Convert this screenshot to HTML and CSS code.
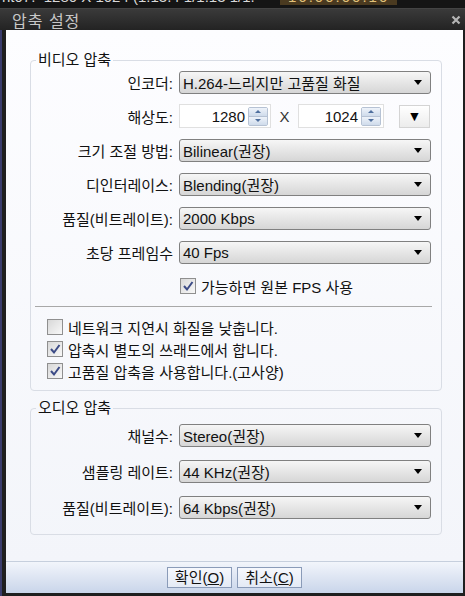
FILE: index.html
```html
<!DOCTYPE html>
<html>
<head>
	<meta charset="utf-8">
	<meta name="viewport" content="width=device-width, initial-scale=1.0">
	<link rel="stylesheet" href="styles.css">
<title>압축 설정</title>
</head>
<body>
<div class="screen">
	<div class="topstrip">
		<div class="strip-line">
			<span class="strip-text">ht07.&nbsp; 1280 X 1024 (1:13.4 1/1:13 1/1.</span>
			<span class="strip-time">16:00:00.10</span>
		</div>
	</div>

	<div class="titlebar">
		<span class="title">압축 설정</span>
		<svg class="close" width="10" height="10" viewBox="0 0 10 10"><path d="M1.5 1.5 L8.5 8.5 M8.5 1.5 L1.5 8.5" stroke="#b4b4b4" stroke-width="2.2"/></svg>
	</div>

	<div class="frame">
		<div class="main">
			<div class="content">
				<fieldset class="group video">
					<legend>비디오 압축</legend>
					<div class="row">
						<label class="lbl">인코더:</label>
						<div class="select">H.264-느리지만 고품질 화질<span class="arrow"></span></div>
					</div>
					<div class="row">
						<label class="lbl">해상도:</label>
						<div class="spin first">
							<span class="value">1280</span>
							<span class="spin-btns"><span class="up"></span><span class="down"></span></span>
						</div>
						<span class="times">X</span>
						<div class="spin second">
							<span class="value">1024</span>
							<span class="spin-btns"><span class="up"></span><span class="down"></span></span>
						</div>
						<div class="preset">&#9660;</div>
					</div>
					<div class="row">
						<label class="lbl">크기 조절 방법:</label>
						<div class="select">Bilinear(권장)<span class="arrow"></span></div>
					</div>
					<div class="row">
						<label class="lbl">디인터레이스:</label>
						<div class="select">Blending(권장)<span class="arrow"></span></div>
					</div>
					<div class="row">
						<label class="lbl">품질(비트레이트):</label>
						<div class="select">2000 Kbps<span class="arrow"></span></div>
					</div>
					<div class="row">
						<label class="lbl">초당 프레임수</label>
						<div class="select">40 Fps<span class="arrow"></span></div>
					</div>
					<div class="row">
						<span class="lbl"></span>
						<div class="check on">가능하면 원본 FPS 사용</div>
					</div>

					<div class="separator"></div>

					<div class="checks">
						<div class="check">네트워크 지연시 화질을 낮춥니다.</div>
						<div class="check on">압축시 별도의 쓰래드에서 합니다.</div>
						<div class="check on">고품질 압축을 사용합니다.(고사양)</div>
					</div>
				</fieldset>

				<fieldset class="group audio">
					<legend>오디오 압축</legend>
					<div class="row">
						<label class="lbl">채널수:</label>
						<div class="select">Stereo(권장)<span class="arrow"></span></div>
					</div>
					<div class="row">
						<label class="lbl">샘플링 레이트:</label>
						<div class="select">44 KHz(권장)<span class="arrow"></span></div>
					</div>
					<div class="row">
						<label class="lbl">품질(비트레이트):</label>
						<div class="select">64 Kbps(권장)<span class="arrow"></span></div>
					</div>
				</fieldset>
			</div>

			<div class="buttonbar">
				<button class="btn">확인(<u>O</u>)</button>
				<button class="btn">취소(<u>C</u>)</button>
			</div>
		</div>
	</div>
</div>
</body>
</html>
```

FILE: styles.css
```css
	body {
		margin: 0;
		background: #181818;
		font-family: "Liberation Sans", "Noto Sans CJK KR", sans-serif;
		font-size: 15px;
		color: #111;
	}

	.screen {
		width: 465px;
		height: 596px;
		display: flex;
		flex-direction: column;
		overflow: hidden;
	}

	/* strip of the window behind, mostly cut off */
	.topstrip {
		height: 8px;
		background: #151515;
		overflow: hidden;
		white-space: nowrap;
	}
	.strip-line {
		display: flex;
		margin-top: -11px;
		line-height: 16px;
		font-size: 15px;
	}
	.strip-text {
		color: #d8d8d8;
		padding-left: 2px;
		width: 278px;
	}
	.strip-time {
		color: #e2c27a;
		background: #4a3a20;
		padding: 0 8px;
		letter-spacing: 2px;
	}

	.titlebar {
		height: 22px;
		display: flex;
		align-items: center;
		justify-content: space-between;
		padding: 0 4px 0 12px;
		background: linear-gradient(#3a3a3a, #232323);
		border-top: 1px solid #444;
		box-sizing: border-box;
	}
	.title {
		color: #c8c8c8;
		font-size: 16px;
		letter-spacing: 1px;
	}
	.close {
		display: block;
	}

	.frame {
		flex: 1;
		display: flex;
		border-left: 2px solid #3a3c6c;
		background: #1e1e1e;
	}
	.main {
		flex: 1;
		display: flex;
		flex-direction: column;
		border-left: 4px solid #1f1f1f;
		border-right: 2px solid #1f1f1f;
		border-bottom: 3px solid #1f1f1f;
	}

	.content {
		flex: 1;
		padding: 22px 21px 0 24px;
		background: linear-gradient(#fdfdff, #f3f5fa);
	}

	.group {
		margin: 0;
		padding: 0 10px 0 0;
		border: 1px solid #d9dde5;
		border-radius: 4px;
	}
	.group legend {
		margin-left: 5px;
		padding: 0 2px;
		line-height: 16px;
		font-size: 15px;
	}
	.video {
		padding-top: 2px;
		padding-bottom: 8px;
	}
	.audio {
		margin-top: 9px;
		padding-top: 7px;
		padding-bottom: 15px;
	}

	.row {
		display: flex;
		align-items: center;
		height: 24px;
		margin-bottom: 10px;
	}
	.audio .row {
		margin-bottom: 12px;
	}
	.audio .row:last-child {
		margin-bottom: 0;
	}
	.lbl {
		width: 142px;
		flex: none;
		text-align: right;
		margin-right: 6px;
		white-space: nowrap;
	}

	.select {
		flex: 1;
		height: 23px;
		box-sizing: border-box;
		display: flex;
		align-items: center;
		padding: 0 8px 0 3px;
		border: 1px solid #808080;
		border-radius: 3px;
		background: linear-gradient(#f6f6f6, #e6e6e6 50%, #d6d6d6);
		white-space: nowrap;
	}
	.arrow {
		margin-left: auto;
		width: 0;
		height: 0;
		border-left: 4px solid transparent;
		border-right: 4px solid transparent;
		border-top: 5px solid #000;
	}

	.spin {
		height: 24px;
		box-sizing: border-box;
		display: flex;
		align-items: center;
		border: 1px solid #e0e0e0;
		background: #fff;
		padding: 2px;
	}
	.spin.first {
		width: 92px;
	}
	.spin.second {
		width: 86px;
	}
	.spin .value {
		flex: 1;
		text-align: right;
		padding-right: 3px;
	}
	.spin-btns {
		width: 20px;
		height: 19px;
		display: flex;
		flex-direction: column;
		border: 1px solid #b6c2d4;
		border-radius: 2px;
		box-sizing: border-box;
	}
	.spin-btns span {
		flex: 1;
		display: flex;
		align-items: center;
		justify-content: center;
		background: linear-gradient(#eef3fa, #cfdbeb);
	}
	.spin-btns .up {
		border-bottom: 1px solid #b6c2d4;
	}
	.spin-btns .up::after {
		content: "";
		border-left: 3px solid transparent;
		border-right: 3px solid transparent;
		border-bottom: 3px solid #4f6f9e;
	}
	.spin-btns .down::after {
		content: "";
		border-left: 3px solid transparent;
		border-right: 3px solid transparent;
		border-top: 3px solid #4f6f9e;
	}
	.times {
		width: 27px;
		text-align: center;
		color: #333;
	}
	.preset {
		margin-left: 15px;
		width: 31px;
		height: 23px;
		box-sizing: border-box;
		display: flex;
		align-items: center;
		justify-content: center;
		border: 1px solid #d4d4d4;
		background: linear-gradient(#ffffff, #ececec);
		font-size: 14px;
		color: #000;
	}

	.check {
		display: flex;
		align-items: center;
		height: 22px;
		white-space: nowrap;
	}
	.check::before {
		content: "";
		width: 14px;
		height: 14px;
		margin-right: 5px;
		border: 1px solid #8f8f8f;
		background: linear-gradient(135deg, #d8d8d8, #f8f8f8);
		flex: none;
	}
	.check.on::before {
		background: url("data:image/svg+xml,%3Csvg xmlns='http://www.w3.org/2000/svg' width='14' height='14'%3E%3Cpath d='M3 7 L6 10.5 L11.5 3' fill='none' stroke='%233c4b86' stroke-width='2'/%3E%3C/svg%3E") center no-repeat, linear-gradient(135deg, #d8d8d8, #f8f8f8);
	}
	.row .check {
		margin-left: 1px;
	}

	.separator {
		height: 1px;
		background: #a8a8a8;
		margin: -2px -1px 0 4px;
	}
	.checks {
		padding: 9px 0 0 16px;
	}

	.buttonbar {
		height: 32px;
		box-sizing: border-box;
		display: flex;
		justify-content: center;
		align-items: center;
		gap: 5px;
		border-top: 1px solid #c6cfdd;
		background: linear-gradient(#f2f5fb, #c9d5ea);
	}
	.btn {
		width: 65px;
		height: 21px;
		padding: 0;
		font-family: "Liberation Sans", "Noto Sans CJK KR", sans-serif;
		font-size: 15px;
		line-height: 19px;
		color: #111;
		border: 1px solid #8a9bb8;
		background: linear-gradient(#f6f8fd, #e4eaf5);
	}
```
